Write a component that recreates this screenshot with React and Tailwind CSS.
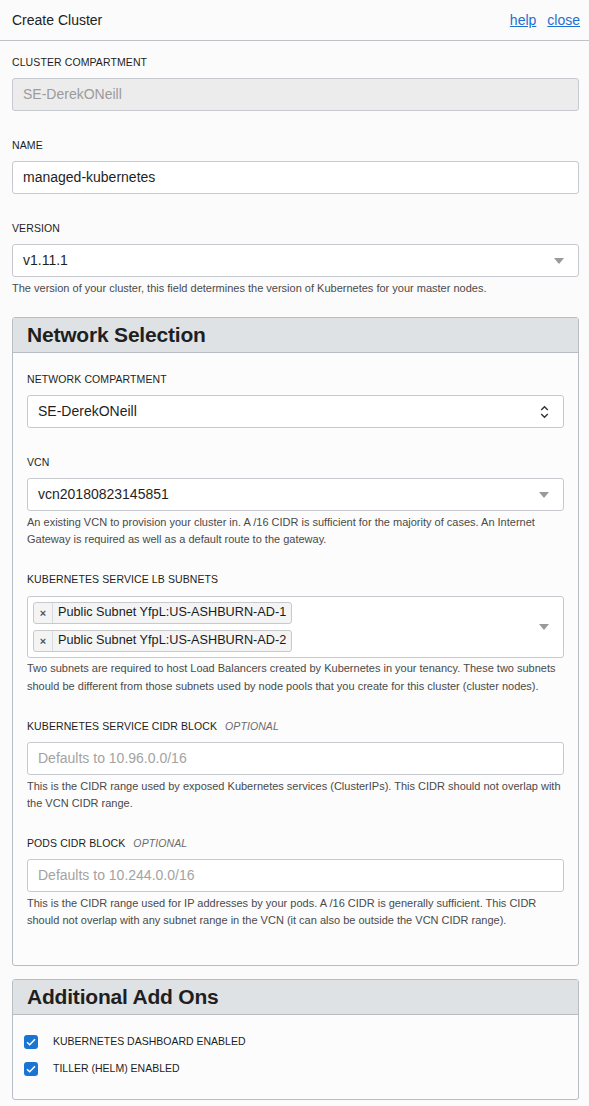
const Label = ({ children, optional }) => (
  <div className="text-[10.5px] leading-[12px] font-medium text-[#1d1d1d] uppercase tracking-[0.1px]">
    {children}
    {optional && (
      <span className="ml-[8px] italic font-normal text-[#6b6b6b]">OPTIONAL</span>
    )}
  </div>
);

const Help = ({ children }) => (
  <p className="mt-[3px] text-[11px] leading-[17px] text-[#4a4a4a]">{children}</p>
);

const Caret = () => (
  <svg width="10" height="6" viewBox="0 0 10 6" className="shrink-0">
    <path d="M0 0h10L5 6z" fill="#9a9a9a" />
  </svg>
);

const UpDown = () => (
  <svg width="9" height="14" viewBox="0 0 9 14" className="shrink-0">
    <path d="M1.2 5L4.5 1.8 7.8 5M1.2 9l3.3 3.2L7.8 9" fill="none" stroke="#333" strokeWidth="1.4" />
  </svg>
);

const Box = ({ children, className = "" }) => (
  <div
    className={`h-[33px] flex items-center justify-between pl-[10px] pr-[14px] border border-[#c6c9cd] rounded-[3px] text-[14px] ${className}`}
  >
    {children}
  </div>
);

const Chip = ({ children }) => (
  <div className="flex items-center h-[22px] w-fit border border-[#c9c9c9] rounded-[3px] bg-[#f4f4f4] text-[12.7px] text-[#1a1a1a]">
    <span className="w-[19px] h-full flex items-center justify-center border-r border-[#d6dbe0] text-[11px] font-bold text-[#555]">
      ×
    </span>
    <span className="px-[5px]">{children}</span>
  </div>
);

const Checked = ({ children }) => (
  <div className="flex items-center gap-[15px]">
    <div className="w-[14px] h-[14px] rounded-[3px] bg-[#1a74d3] flex items-center justify-center">
      <svg width="10" height="8" viewBox="0 0 10 8">
        <path d="M1 4.2l2.7 2.6L9 1.2" fill="none" stroke="#fff" strokeWidth="1.5" />
      </svg>
    </div>
    <span className="text-[10.5px] font-medium text-[#1d1d1d]">{children}</span>
  </div>
);

const Panel = ({ title, children, className = "" }) => (
  <div className={`border border-[#b8bdc3] rounded-[3px] bg-[#fcfcfc] ${className}`}>
    <div className="h-[35px] flex items-center px-[14px] bg-[#dfe2e5] border-b border-[#b8bdc3]">
      <h2 className="text-[21px] font-semibold text-[#1f1f1f] tracking-[-0.2px]">{title}</h2>
    </div>
    {children}
  </div>
);

export default function App() {
  return (
    <div className="min-h-[1106px] bg-[#fbfbfb] text-[#1f1f1f] font-['Liberation_Sans',Arial,sans-serif]">
      <div className="h-[41px] flex items-center justify-between pl-3 pr-[9px] border-b border-[#bfc3c8]">
        <span className="text-[14px] text-[#222]">Create Cluster</span>
        <div className="flex gap-[11px] text-[14px] text-[#1f6fd0]">
          <a className="underline">help</a>
          <a className="underline">close</a>
        </div>
      </div>

      <div className="pl-3 pr-[10px] pt-[15px] pb-[9px]">
        <Label>Cluster Compartment</Label>
        <Box className="mt-[10px] bg-[#ececec] text-[#9b9b9b]">SE-DerekONeill</Box>

        <div className="mt-[28px]">
          <Label>Name</Label>
          <Box className="mt-[10px] bg-white">managed-kubernetes</Box>
        </div>

        <div className="mt-[28px]">
          <Label>Version</Label>
          <Box className="mt-[10px] bg-white">
            <span>v1.11.1</span>
            <Caret />
          </Box>
          <Help>The version of your cluster, this field determines the version of Kubernetes for your master nodes.</Help>
        </div>

        <Panel title="Network Selection" className="mt-[20px]">
          <div className="px-[14px] pt-[20px] pb-[36px]">
            <Label>Network Compartment</Label>
            <Box className="mt-[10px] bg-white">
              <span>SE-DerekONeill</span>
              <UpDown />
            </Box>

            <div className="mt-[28px]">
              <Label>VCN</Label>
              <Box className="mt-[10px] bg-white">
                <span>vcn20180823145851</span>
                <Caret />
              </Box>
              <Help>
                An existing VCN to provision your cluster in. A /16 CIDR is sufficient for the majority of cases. An Internet Gateway is required as well as a default route to the gateway.
              </Help>
            </div>

            <div className="mt-[25px]">
              <Label>Kubernetes Service LB Subnets</Label>
              <div className="mt-[11px] flex items-center justify-between pl-[5px] pr-[14px] py-[5px] border border-[#c6c9cd] rounded-[3px] bg-white">
                <div className="flex flex-col gap-[6px]">
                  <Chip>Public Subnet YfpL:US-ASHBURN-AD-1</Chip>
                  <Chip>Public Subnet YfpL:US-ASHBURN-AD-2</Chip>
                </div>
                <Caret />
              </div>
              <p className="mt-[1px] text-[11px] leading-[18px] text-[#4a4a4a]">
                Two subnets are required to host Load Balancers created by Kubernetes in your tenancy. These two subnets should be different from those subnets used by node pools that you create for this cluster (cluster nodes).
              </p>
            </div>

            <div className="mt-[25px]">
              <Label optional>Kubernetes Service CIDR Block</Label>
              <Box className="mt-[10px] bg-white text-[#a3a3a3]">Defaults to 10.96.0.0/16</Box>
              <Help>
                This is the CIDR range used by exposed Kubernetes services (ClusterIPs). This CIDR should not overlap with the VCN CIDR range.
              </Help>
            </div>

            <div className="mt-[25px]">
              <Label optional>Pods CIDR Block</Label>
              <Box className="mt-[10px] bg-white text-[#a3a3a3]">Defaults to 10.244.0.0/16</Box>
              <Help>
                This is the CIDR range used for IP addresses by your pods. A /16 CIDR is generally sufficient. This CIDR should not overlap with any subnet range in the VCN (it can also be outside the VCN CIDR range).
              </Help>
            </div>
          </div>
        </Panel>

        <Panel title="Additional Add Ons" className="mt-[13px]">
          <div className="px-[11px] pt-[19px] pb-[22px] flex flex-col gap-[11px]">
            <Checked>KUBERNETES DASHBOARD ENABLED</Checked>
            <Checked>TILLER (HELM) ENABLED</Checked>
          </div>
        </Panel>
      </div>
    </div>
  );
}
